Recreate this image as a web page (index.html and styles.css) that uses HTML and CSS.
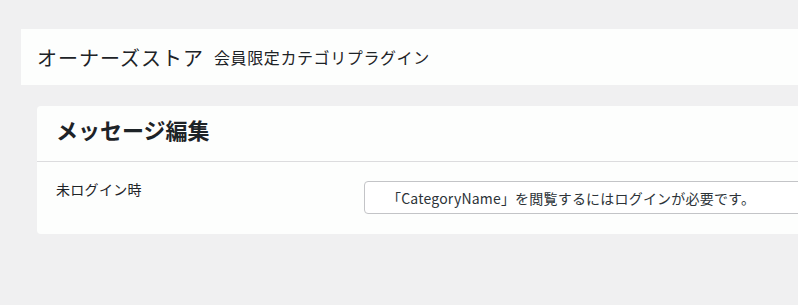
FILE: index.html
```html
<!DOCTYPE html>
<html lang="ja">
<head>
<meta charset="utf-8">
<link rel="stylesheet" href="styles.css">
</head>
<body>
<div class="page">
  <header class="topbar">
    <h1 class="brand">オーナーズストア</h1>
    <span class="plugin">会員限定カテゴリプラグイン</span>
  </header>
  <section class="card">
    <div class="card-head">
      <h2 class="card-title">メッセージ編集</h2>
    </div>
    <div class="row">
      <label class="row-label" for="msg">未ログイン時</label>
      <input class="text-input" id="msg" type="text" value="「CategoryName」を閲覧するにはログインが必要です。">
    </div>
  </section>
</div>
</body>
</html>
```
FILE: styles.css
```css
html, body {
  margin: 0;
  padding: 0;
  background: #f0f0f1;
  overflow: hidden;
}
body {
  font-family: "Noto Sans CJK JP", "Noto Sans", sans-serif;
  color: #1d2327;
}
.page {
  padding: 29px 0 0 21px;
  width: 840px;
}
.topbar {
  background: #fdfefd;
  height: 56px;
  display: flex;
  align-items: center;
  padding-left: 16px;
  gap: 10px;
  box-sizing: border-box;
}
.brand {
  margin: 0;
  font-size: 20px;
  font-weight: 400;
  letter-spacing: 1px;
}
.plugin {
  font-size: 16px;
  letter-spacing: 0.6px;
}
.card {
  margin: 21px 0 0 16px;
  background: #fdfefd;
  border-radius: 4px;
}
.card-head {
  height: 56px;
  box-sizing: border-box;
  display: flex;
  align-items: center;
  padding: 0 0 10px 19px;
  border-bottom: 1px solid #dcdcde;
}
.card-title {
  margin: 0;
  font-size: 22px;
  font-weight: 700;
}
.row {
  display: grid;
  grid-template-columns: 308px 1fr;
  padding: 19px 0 20px 19px;
  align-items: start;
}
.row-label {
  font-size: 14px;
  line-height: 16px;
  letter-spacing: 0.3px;
}
.text-input {
  height: 33px;
  box-sizing: border-box;
  border: 1px solid #c3c4c7;
  border-radius: 4px;
  padding: 0 12px 0 22px;
  font-family: "Noto Sans CJK JP", "Noto Sans", sans-serif;
  font-size: 14px;
  letter-spacing: 0.2px;
  color: #2c3338;
  background: #fff;
  width: 100%;
}
```
